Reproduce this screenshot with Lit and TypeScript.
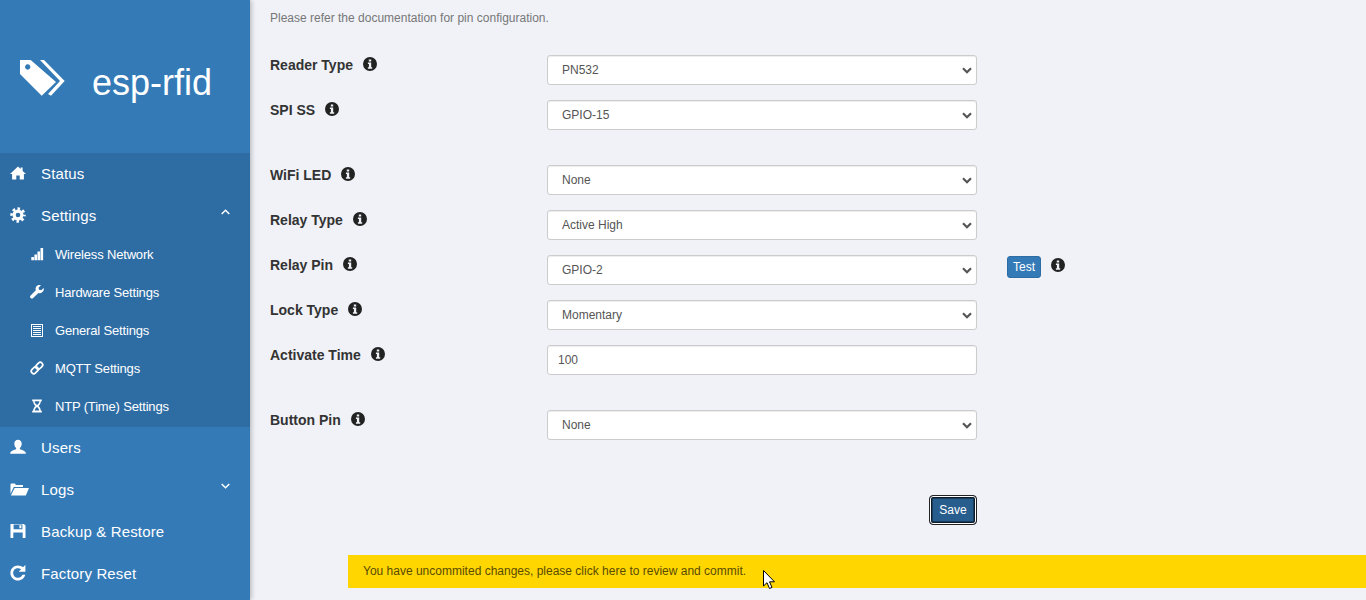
import { LitElement, html, css, svg } from "lit";
import { customElement } from "lit/decorators.js";

const I: Record<string, any> = {
  home: svg`<path d="M8 1.600 L10.600 4 V2.400 H12.600 V5.900 L16 9 H13.900 V14.600 H9.700 V10.400 H6.300 V14.600 H2.100 V9 H0 Z"/>`,
  gear: svg`<circle cx="8" cy="8" r="3.900" fill="none" stroke="currentColor" stroke-width="3.200"/><circle cx="8" cy="8" r="6.400" fill="none" stroke="currentColor" stroke-width="2.600" stroke-dasharray="2.600 2.430" stroke-dashoffset="1.300"/>`,
  signal: svg`<path d="M1.500 11.500h3V15h-3zM5 8.500h3V15H5zM8.500 5h3v10h-3zM12 1h3v14h-3z"/>`,
  wrench: svg`<path d="M15.600 3.300 L12.800 6 L10.300 5.500 L9.800 3 L12.500 .4 C10.400 -.3 8 .3 6.900 2.200 C6.200 3.500 6.200 4.900 6.700 6 L.7 12 C-.1 12.900 -.1 14 .7 14.900 C1.600 15.700 2.800 15.700 3.600 14.900 L9.600 9 C10.900 9.500 12.300 9.500 13.500 8.700 C15.400 7.600 16.200 5.400 15.600 3.300 Z"/>`,
  list: svg`<path transform="scale(1.1429)" fill-rule="evenodd" d="M1 1h12v13H1z M2 2v11h10V2z M3 3h8v1H3z M3 5h8v1H3z M3 7h8v1H3z M3 9h8v1H3z M3 11h8v1H3z"/>`,
  link: svg`<g fill="none" stroke="currentColor" stroke-width="2" transform="rotate(-45 8 8)"><rect x="0" y="5.200" width="8.800" height="5.600" rx="2.800"/><rect x="7.200" y="5.200" width="8.800" height="5.600" rx="2.800"/></g>`,
  hourglass: svg`<path fill-rule="evenodd" d="M2.500 .5h11v2h-1.100c-.1 2.600-1.300 4.300-2.700 5.500 1.400 1.200 2.600 2.900 2.700 5.500h1.100v2h-11v-2h1.100c.1-2.600 1.300-4.300 2.700-5.500-1.400-1.200-2.600-2.900-2.700-5.500H2.500z M5.300 2.500c.1 1.900 1.300 3.400 2.700 4.400 1.400-1 2.600-2.500 2.700-4.400z M8 9.100c-1.300 1-2.300 2.300-2.600 3.900h5.200c-.3-1.600-1.300-2.900-2.600-3.900z"/>`,
  user: svg`<path d="M8 .8c2.300 0 3.700 1.700 3.700 3.900 0 1.700-.8 3.400-1.800 4.300v1.300c1.900.6 5.300 1.600 5.900 3.400v1.100H.2v-1.100c.6-1.800 4-2.800 5.900-3.400V9C5.100 8.100 4.300 6.400 4.300 4.700 4.300 2.500 5.700.8 8 .8z"/>`,
  folder: svg`<path d="M.5 13 V3.600 C.5 3 1 2.500 1.600 2.500 H4.800 L6 4 H13 V6 H3.700 Z M4.600 7 H19 L15.800 14.500 H.9 Z"/>`,
  save: svg`<path fill-rule="evenodd" d="M.5 1h13.400l1.600 1.600V15H.5z M3.600 1.500v4.700h8.800V1.500z M9.400 2.300h2v3h-2z M3.300 9.500V15h9.400V9.500z"/>`,
  refresh: svg`<path transform="translate(-2 -2) scale(1.200)" d="M8.300 2 C9.900 2 11.400 2.600 12.500 3.600 L14.500 1.600 V7.200 H8.900 L10.900 5.200 C10.200 4.600 9.300 4.300 8.300 4.300 C6.100 4.300 4.300 6 4.300 8.300 C4.300 10.500 6.100 12.300 8.300 12.300 C10 12.300 11.400 11.300 12 9.800 H14.400 C13.700 12.600 11.300 14.600 8.300 14.600 C4.800 14.600 2 11.800 2 8.300 C2 4.800 4.800 2 8.300 2 Z"/>`,
};

const icon = (n: string, cls: string) =>
  html`<svg class=${cls} viewBox="0 0 ${n === "folder" ? 19 : 16} 16" fill="currentColor" aria-hidden="true">${I[n]}</svg>`;

const info = html`<svg class="info" viewBox="0 0 14 14" aria-hidden="true"><path fill-rule="evenodd" d="M7 0a7 7 0 1 0 0 14A7 7 0 0 0 7 0z M5.800 2.400h2.400v2.100H5.800z M4.900 5.500h3.300v4.800h1v1.500H4.900v-1.500h1V7H4.900z"/></svg>`;

type Row = { label: string; value: string; input?: boolean; after?: boolean; test?: boolean };

const rows: Row[] = [
  { label: "Reader Type", value: "PN532" },
  { label: "SPI SS", value: "GPIO-15", after: true },
  { label: "WiFi LED", value: "None" },
  { label: "Relay Type", value: "Active High" },
  { label: "Relay Pin", value: "GPIO-2", test: true },
  { label: "Lock Type", value: "Momentary" },
  { label: "Activate Time", value: "100", input: true, after: true },
  { label: "Button Pin", value: "None" },
];

@customElement("app-root")
export class AppRoot extends LitElement {
  static styles = css`
    :host { display: flex; width: 1366px; height: 600px; overflow: hidden; background: #f0f2f7;
      font-family: "Liberation Sans", Arial, sans-serif; color: #333; }
    .side { flex: 0 0 250px; width: 250px; height: 600px; background: #337ab7; color: #fff;
      box-shadow: 1px 0 5px rgba(0, 0, 0, .28); position: relative; z-index: 1; display: flex; flex-direction: column; }
    .brand { height: 153px; display: flex; align-items: center; box-sizing: border-box; padding: 12px 0 0 20px; }
    .brand svg { width: 46px; height: 37px; flex: none; margin-right: 26px; margin-top: -8px; }
    .brand span { font-size: 36px; line-height: 40px; }
    .dark { background: #2e6da4; }
    .it { height: 42px; box-sizing: border-box; padding: 0 0 2px 10px; display: flex; align-items: center; font-size: 15px; letter-spacing: .15px; position: relative; }
    .it .ic { width: 16px; height: 16px; margin-right: 15px; flex: none; }
    .it .ic.wide { width: 19px; margin-right: 12px; }
    .chev { position: absolute; left: 221px; width: 9px; height: 6px; top: 14px; fill: none; stroke: #fff; stroke-width: 1.500; }
    .sub { height: 38px; box-sizing: border-box; padding: 0 0 4px 30px; display: flex; align-items: center; font-size: 13px; letter-spacing: -.17px; }
    .sub .ic { width: 14px; height: 14px; margin-right: 11px; flex: none; }
    .main { flex: 1; padding: 8px 0 0 20px; min-width: 0; }
    .help { font-size: 12px; line-height: 20px; color: #777; margin-bottom: 27px; }
    .row { display: flex; height: 30px; margin-bottom: 15px; }
    .row.after { margin-bottom: 35px; }
    .lab { width: 277px; flex: none; display: flex; align-items: flex-start; gap: 10px; font-size: 14px; font-weight: 700;
      line-height: 20px; color: #333; }
    .info { width: 14px; height: 14px; fill: #222; margin-top: 2px; flex: none; }
    .ctl { width: 430px; height: 30px; box-sizing: border-box; flex: none; border: 1px solid #ccc; border-radius: 3px; background: #fff;
      color: #555; font: 12px "Liberation Sans", Arial, sans-serif; padding: 0 10px; box-shadow: inset 0 1px 1px rgba(0, 0, 0, .075); }
    .pick { position: relative; width: 430px; height: 30px; flex: none; }
    select.ctl { appearance: none; -webkit-appearance: none; padding: 0 14px; display: block; }
    .arrow { position: absolute; right: 5px; top: 12px; width: 10px; height: 7px; fill: none; stroke: #555; stroke-width: 2.200; pointer-events: none; }
    .test { margin: 1px 0 0 30px; width: 34px; height: 22px; border: 1px solid #2e6da4; border-radius: 3px; background: #337ab7; color: #fff;
      font: 12px/20px "Liberation Sans", Arial, sans-serif; padding: 0; }
    .tinfo { margin: 1px 0 0 10px; }
    .save-line { width: 707px; display: flex; justify-content: flex-end; margin-top: 55px; }
    .save { width: 48px; height: 30px; box-sizing: border-box; padding: 0; border: 1px solid #222; border-radius: 4px; background: #285e8e; color: #fff;
      font: 12px "Liberation Sans", Arial, sans-serif; box-shadow: inset 0 0 0 1px #fff, inset 0 0 0 2.500px #0c1c2a; }
    .bar { margin: 30px 0 0 78px; height: 33px; background: #ffd600; color: #5a4a00; font-size: 12px; line-height: 33px; padding-left: 15px; position: relative; }
    .cursor { position: absolute; left: 415px; top: 15px; width: 13px; height: 19px; }
  `;

  render() {
    return html`
      <nav class="side">
        <div class="brand">
          <svg viewBox="0 0 46 37" fill="#fff" aria-hidden="true">
            <path fill-rule="evenodd" d="M0 0H10.700L36 22 21.700 35.700 0 14Z M7.700 4.300a2.700 2.700 0 1 0 .01 0Z"/>
            <path d="M20 0H24L44.700 21 31 35.700 28 34 40 21Z"/>
          </svg>
          <span>esp-rfid</span>
        </div>
        <div class="it dark">${icon("home", "ic")}Status</div>
        <div class="dark">
          <div class="it">${icon("gear", "ic")}Settings
            <svg class="chev" viewBox="0 0 9 6"><path d="M.7 5 4.500 1.200 8.300 5"/></svg>
          </div>
          <div class="sub">${icon("signal", "ic")}Wireless Network</div>
          <div class="sub">${icon("wrench", "ic")}Hardware Settings</div>
          <div class="sub">${icon("list", "ic")}General Settings</div>
          <div class="sub">${icon("link", "ic")}MQTT Settings</div>
          <div class="sub">${icon("hourglass", "ic")}NTP (Time) Settings</div>
        </div>
        <div class="it">${icon("user", "ic")}Users</div>
        <div class="it">${icon("folder", "ic wide")}Logs
          <svg class="chev" viewBox="0 0 9 6"><path d="M.7 1 4.500 4.800 8.300 1"/></svg>
        </div>
        <div class="it">${icon("save", "ic")}Backup &amp; Restore</div>
        <div class="it">${icon("refresh", "ic")}Factory Reset</div>
      </nav>
      <main class="main">
        <div class="help">Please refer the documentation for pin configuration.</div>
        ${rows.map(
          (r) => html`<div class="row ${r.after ? "after" : ""}">
            <div class="lab">${r.label} ${info}</div>
            ${r.input
              ? html`<input class="ctl" .value=${r.value} />`
              : html`<div class="pick"><select class="ctl"><option>${r.value}</option></select><svg class="arrow" viewBox="0 0 10 7"><path d="M1 1.200 5 5.200 9 1.200"/></svg></div>`}
            ${r.test ? html`<button class="test">Test</button><span class="tinfo">${info}</span>` : ""}
          </div>`
        )}
        <div class="save-line"><button class="save">Save</button></div>
        <div class="bar">You have uncommited changes, please click here to review and commit.
          <svg class="cursor" viewBox="0 0 13 19"><path d="M.5.5V16L4 12.700 6.500 18.500 9 17.400 6.500 11.800H11.500Z" fill="#fff" stroke="#000"/></svg>
        </div>
      </main>
    `;
  }
}
